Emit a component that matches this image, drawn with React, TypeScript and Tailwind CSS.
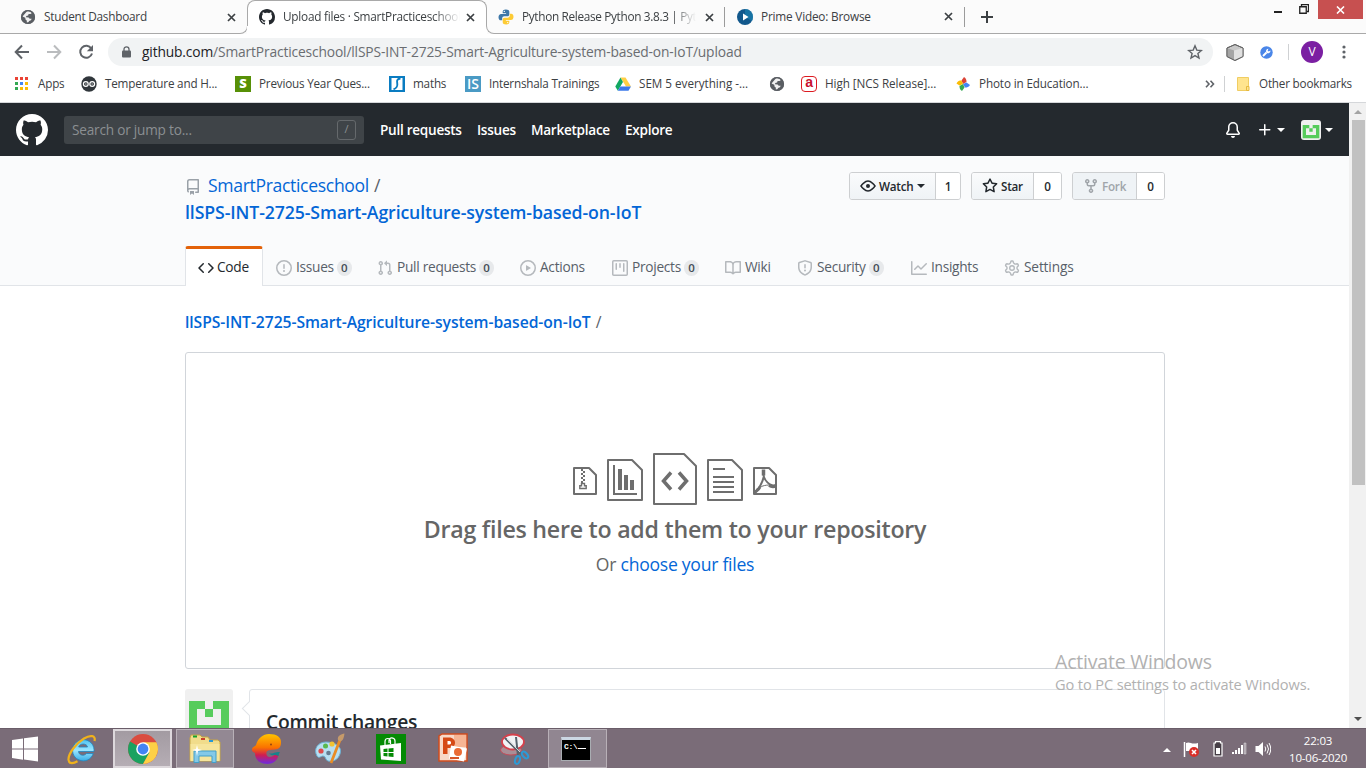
import type { ReactNode } from "react";

const P = {
  github: "M8 0C3.58 0 0 3.58 0 8c0 3.54 2.29 6.53 5.47 7.59.4.07.55-.17.55-.38 0-.19-.01-.82-.01-1.49-2.01.37-2.53-.49-2.69-.94-.09-.23-.48-.94-.82-1.13-.28-.15-.68-.52-.01-.53.63-.01 1.08.58 1.23.82.72 1.21 1.87.87 2.33.66.07-.52.28-.87.51-1.07-1.78-.2-3.64-.89-3.64-3.95 0-.87.31-1.59.82-2.15-.08-.2-.36-1.02.08-2.12 0 0 .67-.21 2.2.82.64-.18 1.32-.27 2-.27.68 0 1.36.09 2 .27 1.53-1.04 2.2-.82 2.2-.82.44 1.1.16 1.92.08 2.12.51.56.82 1.27.82 2.15 0 3.07-1.87 3.75-3.65 3.95.29.25.54.73.54 1.48 0 1.07-.01 1.93-.01 2.2 0 .21.15.46.55.38A8.013 8.013 0 0016 8c0-4.42-3.58-8-8-8z",
  repo: "M2 2.5A2.5 2.5 0 014.5 0h8.75a.75.75 0 01.75.75v12.5a.75.75 0 01-.75.75h-2.5a.75.75 0 110-1.5h1.75v-2h-8a1 1 0 00-.714 1.7.75.75 0 01-1.072 1.05A2.495 2.495 0 012 11.5v-9zm10.5-1V9h-8c-.356 0-.694.074-1 .208V2.5a1 1 0 011-1h8zM5 12.25v3.25a.25.25 0 00.4.2l1.45-1.087a.25.25 0 01.3 0L8.6 15.7a.25.25 0 00.4-.2v-3.25a.25.25 0 00-.25-.25h-3.5a.25.25 0 00-.25.25z",
  code: "M4.72 3.22a.75.75 0 011.06 1.06L2.06 8l3.72 3.72a.75.75 0 11-1.06 1.06L.47 8.53a.75.75 0 010-1.06l4.25-4.25zm6.56 0a.75.75 0 10-1.06 1.06L13.94 8l-3.72 3.72a.75.75 0 101.06 1.06l4.25-4.25a.75.75 0 000-1.06l-4.25-4.25z",
  issue: "M8 1.5a6.5 6.5 0 100 13 6.5 6.5 0 000-13zM0 8a8 8 0 1116 0A8 8 0 010 8zm9 3a1 1 0 11-2 0 1 1 0 012 0zm-.25-6.25a.75.75 0 00-1.5 0v3.5a.75.75 0 001.5 0v-3.5z",
  pull: "M7.177 3.073L9.573.677A.25.25 0 0110 .854v4.792a.25.25 0 01-.427.177L7.177 3.427a.25.25 0 010-.354zM3.75 2.5a.75.75 0 100 1.5.75.75 0 000-1.5zm-2.25.75a2.25 2.25 0 113 2.122v5.256a2.251 2.251 0 11-1.5 0V5.372A2.25 2.25 0 011.5 3.25zM11 2.5h-1V4h1a1 1 0 011 1v5.628a2.251 2.251 0 101.5 0V5A2.5 2.5 0 0011 2.5zm1 10.25a.75.75 0 111.5 0 .75.75 0 01-1.5 0zM3.75 12a.75.75 0 100 1.5.75.75 0 000-1.5z",
  play: "M1.5 8a6.5 6.5 0 1113 0 6.5 6.5 0 01-13 0zM8 0a8 8 0 100 16A8 8 0 008 0zM6.379 5.227A.25.25 0 006 5.442v5.117a.25.25 0 00.379.214l4.264-2.559a.25.25 0 000-.428L6.379 5.227z",
  project: "M1.75 0A1.75 1.75 0 000 1.75v12.5C0 15.216.784 16 1.75 16h12.5A1.75 1.75 0 0016 14.25V1.75A1.75 1.75 0 0014.25 0H1.75zM1.5 1.75a.25.25 0 01.25-.25h12.5a.25.25 0 01.25.25v12.5a.25.25 0 01-.25.25H1.75a.25.25 0 01-.25-.25V1.75zM11.75 3a.75.75 0 00-.75.75v7.5a.75.75 0 001.5 0v-7.5a.75.75 0 00-.75-.75zm-8.25.75a.75.75 0 011.5 0v5.5a.75.75 0 01-1.5 0v-5.5zM8 3a.75.75 0 00-.75.75v3.5a.75.75 0 001.5 0v-3.5A.75.75 0 008 3z",
  book: "M0 1.75A.75.75 0 01.75 1h4.253c1.227 0 2.317.59 3 1.501A3.744 3.744 0 0111.006 1h4.245a.75.75 0 01.75.75v10.5a.75.75 0 01-.75.75h-4.507a2.25 2.25 0 00-1.591.659l-.622.621a.75.75 0 01-1.06 0l-.622-.621A2.25 2.25 0 005.258 13H.75a.75.75 0 01-.75-.75V1.75zm8.755 3a2.25 2.25 0 012.25-2.25H14.5v9h-3.757c-.71 0-1.4.201-1.992.572l.004-7.322zm-1.504 7.324l.004-5.073-.002-2.253A2.25 2.25 0 005.003 2.5H1.5v9h3.757a3.75 3.75 0 011.994.574z",
  shield: "M7.467.133a1.75 1.75 0 011.066 0l5.25 1.68A1.75 1.75 0 0115 3.48V7c0 1.566-.32 3.182-1.303 4.682-.983 1.498-2.585 2.813-5.032 3.855a1.7 1.7 0 01-1.33 0c-2.447-1.042-4.049-2.357-5.032-3.855C1.32 10.182 1 8.566 1 7V3.48a1.75 1.75 0 011.217-1.667l5.25-1.68zm.61 1.429a.25.25 0 00-.153 0l-5.25 1.68a.25.25 0 00-.174.238V7c0 1.358.275 2.666 1.057 3.86.784 1.194 2.121 2.34 4.366 3.297a.2.2 0 00.154 0c2.245-.956 3.582-2.104 4.366-3.298C13.225 9.666 13.5 8.36 13.5 7V3.48a.25.25 0 00-.174-.237l-5.25-1.68zM9 10.5a1 1 0 11-2 0 1 1 0 012 0zm-.25-5.75a.75.75 0 10-1.5 0v3a.75.75 0 001.5 0v-3z",
  graph: "M1.5 1.75a.75.75 0 00-1.5 0v12.5c0 .414.336.75.75.75h14.5a.75.75 0 000-1.5H1.5V1.75zm14.28 2.53a.75.75 0 00-1.06-1.06L10 7.94 7.53 5.47a.75.75 0 00-1.06 0L3.22 8.72a.75.75 0 001.06 1.06L7 7.06l2.47 2.47a.75.75 0 001.06 0l5.25-5.25z",
  star: "M8 .25a.75.75 0 01.673.418l1.882 3.815 4.21.612a.75.75 0 01.416 1.279l-3.046 2.97.719 4.192a.75.75 0 01-1.088.791L8 12.347l-3.766 1.98a.75.75 0 01-1.088-.79l.72-4.194L.818 6.374a.75.75 0 01.416-1.28l4.21-.611L7.327.668A.75.75 0 018 .25zm0 2.445L6.615 5.5a.75.75 0 01-.564.41l-3.097.45 2.24 2.184a.75.75 0 01.216.664l-.528 3.084 2.769-1.456a.75.75 0 01.698 0l2.77 1.456-.53-3.084a.75.75 0 01.216-.664l2.24-2.183-3.096-.45a.75.75 0 01-.564-.41L8 2.694v.001z",
  fork: "M5 3.25a.75.75 0 11-1.5 0 .75.75 0 011.5 0zm0 2.122a2.25 2.25 0 10-1.5 0v.878A2.25 2.25 0 005.75 8.5h1.5v2.128a2.251 2.251 0 101.5 0V8.5h1.5a2.25 2.25 0 002.25-2.25v-.878a2.25 2.25 0 10-1.5 0v.878a.75.75 0 01-.75.75h-4.5A.75.75 0 015 6.25v-.878zm3.75 7.378a.75.75 0 11-1.5 0 .75.75 0 011.5 0zm3-8.75a.75.75 0 100-1.5.75.75 0 000 1.5z",
  bell: "M8 16a2 2 0 001.985-1.75c.017-.137-.097-.25-.235-.25h-3.5c-.138 0-.252.113-.235.25A2 2 0 008 16zM8 1.5A3.5 3.5 0 004.5 5v2.947c0 .346-.102.683-.294.97l-1.703 2.556a.018.018 0 00-.003.01l.018.017h10.964l.018-.017a.017.017 0 00-.003-.01l-1.703-2.554a1.75 1.75 0 01-.294-.97V5A3.5 3.5 0 008 1.5zM3 5a5 5 0 0110 0v2.947c0 .05.015.098.042.139l1.703 2.555A1.518 1.518 0 0113.482 13H2.518a1.518 1.518 0 01-1.263-2.36l1.703-2.554A.25.25 0 003 7.947V5z",
  plus: "M7.75 2a.75.75 0 01.75.75V7h4.25a.75.75 0 110 1.5H8.5v4.25a.75.75 0 11-1.5 0V8.5H2.75a.75.75 0 010-1.5H7V2.75A.75.75 0 017.75 2z",
};

const GEAR = "M7.429 1.025a7 7 0 011.142 0c.3.03.5.25.57.5l.289 1.105c.1.4.4.7.72.87.2.1.4.21.58.33.33.22.73.32 1.13.22l1.102-.303c.3-.08.58.03.74.26.25.35.46.72.64 1.1.12.27.06.57-.16.79l-.815.806c-.28.28-.41.67-.39 1.06v.48c-.02.39.11.78.39 1.06l.815.806c.22.22.28.52.16.79-.18.38-.39.75-.64 1.1-.16.23-.44.34-.74.26l-1.102-.303c-.4-.1-.8 0-1.13.22-.18.12-.38.23-.58.33-.32.17-.62.47-.72.87l-.289 1.105c-.07.25-.27.47-.57.5a7 7 0 01-1.142 0c-.3-.03-.5-.25-.57-.5l-.289-1.105c-.1-.4-.4-.7-.72-.87-.2-.1-.4-.21-.58-.33-.33-.22-.73-.32-1.13-.22l-1.102.303c-.3.08-.58-.03-.74-.26-.25-.35-.46-.72-.64-1.1-.12-.27-.06-.57.16-.79l.815-.806c.28-.28.41-.67.39-1.06v-.48c.02-.39-.11-.78-.39-1.06l-.815-.806c-.22-.22-.28-.52-.16-.79.18-.38.39-.75.64-1.1.16-.23.44-.34.74-.26l1.102.303c.4.1.8 0 1.13-.22.18-.12.38-.23.58-.33.32-.17.62-.47.72-.87l.289-1.105c.07-.25.27-.47.57-.5z";

function Oct({ d, size = 16, className = "" }: { d: string; size?: number; className?: string }) {
  return (
    <svg width={size} height={size} viewBox="0 0 16 16" fill="currentColor" fillRule="evenodd" className={"shrink-0 " + className}>
      <path d={d} />
    </svg>
  );
}

function Svg({ w = 16, h, className = "", children }: { w?: number; h?: number; className?: string; children: ReactNode }) {
  const hh = h ?? w;
  return (
    <svg width={w} height={hh} viewBox={`0 0 ${w} ${hh}`} fill="none" className={"shrink-0 " + className}>
      {children}
    </svg>
  );
}

function Globe() {
  return (
    <Svg>
      <circle cx="8" cy="8" r="7" fill="#5a5e63" />
      <path d="M7 2.200c2-.2 3.800.5 4.900 1.800L10.600 5l-2 .1-.5 1.500-1.900.3-.1 1.300 2.500.3 1.100 1.200 2 .1-.8 1.500-1.800.6-.7 1.400-1.700.4.2-2-1.400-1.200-.2-1.700-2.800-1.400z" fill="#f1f1f1" />
      <circle cx="8" cy="8" r="6.400" stroke="#5a5e63" strokeWidth="1.400" />
    </Svg>
  );
}

function Close() {
  return (
    <Svg w={9} className="text-[#3c4043]">
      <path d="M1 1l7 7M8 1L1 8" stroke="currentColor" strokeWidth="1.700" />
    </Svg>
  );
}

function Python() {
  const d = "M7.900 .6C5.200.6 4.700 1.800 4.700 2.800v1.500h3.400v.6H3.200C1.500 4.900.5 6.200.5 8.200s1 3.100 2.300 3.100h1.400V9.400c0-1.200.9-2.100 2.100-2.100h3.200c1 0 1.800-.8 1.800-1.800V2.800C11.300 1.300 10 .6 7.900.6z";
  return (
    <Svg>
      <path d={d} fill="#3d77a8" />
      <path d={d} fill="#fdcb35" transform="rotate(180 8 8)" />
      <circle cx="6.300" cy="2.400" r=".7" fill="#fff" />
      <circle cx="9.700" cy="13.600" r=".7" fill="#fff" />
    </Svg>
  );
}

function Identicon({ size }: { size: number }) {
  return (
    <svg width={size} height={size} viewBox="0 0 48 48" className="shrink-0 rounded-[3px] bg-[#f0f0f0]">
      <path fill="#57cc5c" fillRule="evenodd" d="M4 12h16v8h8v-8h16v32H4zM12 20v16h24V20h-8v8h-8v-8z" />
    </svg>
  );
}

function BrowserTabs() {
  return (
    <div className="flex h-[34px] items-start bg-[#fbfbfb] text-[11.800px] tracking-[-0.250px] text-[#3c4043]">
      <div className="relative flex h-[34px] w-[247px] items-center pl-5 before:absolute before:right-[-1px] before:bottom-0 before:h-[26px] before:w-[248px] before:rounded-br-lg before:border-r before:border-b before:border-[#a9a9a9]">
        <Globe />
        <span className="ml-2 w-[183px] whitespace-nowrap">Student Dashboard</span>
        <Close />
      </div>
      <div className="relative flex h-[34px] w-60 items-center bg-white pl-3">
        <span className="absolute -left-px top-0 h-[26px] w-2 bg-[#fbfbfb]" />
        <span className="absolute -right-px top-0 h-[26px] w-2 bg-[#fbfbfb]" />
        <span className="absolute top-0 left-0 h-[26px] w-[240px] rounded-t-lg border-x border-t border-[#a9a9a9] bg-white" />
        <Oct d={P.github} className="relative text-[#24292e]" />
        <span className="relative ml-2 w-[177px] overflow-hidden whitespace-nowrap [mask-image:linear-gradient(90deg,#000_150px,transparent)]">Upload files · SmartPracticeschool</span>
        <span className="relative ml-[6px]"><Close /></span>
      </div>
      <div className="relative flex h-[34px] w-[238px] items-center pl-[11px] before:absolute before:bottom-0 before:-left-px before:h-[26px] before:w-[239px] before:rounded-bl-lg before:border-b before:border-l before:border-[#a9a9a9]">
        <Python />
        <span className="ml-2 w-[174px] overflow-hidden tracking-[-0.330px] whitespace-nowrap [mask-image:linear-gradient(90deg,#000_150px,transparent)]">Python Release Python 3.8.3 | Python</span>
        <span className="ml-[9px]"><Close /></span>
        <span className="absolute right-0 top-[7px] h-5 w-px bg-[#9b9b9b]" />
      </div>
      <div className="relative flex h-[34px] w-[240px] items-center border-b border-[#a9a9a9] pl-3">
        <Svg>
          <circle cx="8" cy="8" r="8" fill="#12588c" />
          <path d="M8 0a8 8 0 017 12L8 8z" fill="#1c86b4" opacity=".6" />
          <path d="M6 4.500v7L11.500 8z" fill="#fff" />
        </Svg>
        <span className="ml-2 w-[183px] tracking-[-0.200px] whitespace-nowrap">Prime Video: Browse</span>
        <Close />
        <span className="absolute right-0 top-[7px] h-5 w-px bg-[#9b9b9b]" />
      </div>
      <div className="flex h-[34px] grow border-b border-[#a9a9a9]">
        <Svg w={12} className="mt-[11px] ml-4"><path d="M6 0v12M0 6h12" stroke="#3c4043" strokeWidth="2" /></Svg>
        <span className="mt-[11px] ml-[281px] h-[2px] w-2 bg-[#222]" />
        <Svg w={10} className="mt-1 ml-[17px]"><path d="M2.500 2V.5h7v7H8M.75 2.750h6.500v6.500H.75z" stroke="#222" strokeWidth="1.300" /></Svg>
        <div className="ml-[9px] flex h-[19px] w-[45px] items-center justify-center bg-[#c75050]">
          <Svg w={9} h={8}><path d="M1 .5l7 7M8 .5l-7 7" stroke="#fff" strokeWidth="1.600" /></Svg>
        </div>
      </div>
    </div>
  );
}

function Toolbar() {
  return (
    <div className="flex h-9 items-center bg-white">
      <Svg className="ml-[14px] text-[#5f6368]"><path d="M15 8H2M8 1.500L1.700 8 8 14.500" stroke="currentColor" strokeWidth="2" /></Svg>
      <Svg className="ml-4 text-[#babcbe]"><path d="M1 8h13M8 1.500L14.300 8 8 14.500" stroke="currentColor" strokeWidth="2" /></Svg>
      <Svg className="ml-4 text-[#5f6368]"><path d="M13.300 4.500A6 6 0 1014 9.500" stroke="currentColor" strokeWidth="2" /><path d="M15 1v6.200H8.800z" fill="currentColor" /></Svg>
      <div className="ml-[14px] flex h-7 w-[1105px] items-center rounded-full bg-[#f1f3f4] text-[13.800px] tracking-[-0.150px]">
        <Svg w={9} h={12} className="ml-[14px]"><path d="M2 5V3.300a2.500 2.500 0 015 0V5" stroke="#5f6368" strokeWidth="1.300" /><rect y="4.500" width="9" height="7" rx="1" fill="#5f6368" /></Svg>
        <span className="ml-[11px] w-[1045px] pt-px whitespace-nowrap text-[#6a6d71]"><span className="text-[#202124]">github.com</span>/SmartPracticeschool/llSPS-INT-2725-Smart-Agriculture-system-based-on-IoT/upload</span>
        <Svg><path d="M8 1.800l1.800 4.300 4.600.4-3.500 3 1.100 4.500L8 11.600 4 14l1.100-4.500-3.500-3 4.600-.4z" stroke="#5f6368" strokeWidth="1.400" /></Svg>
      </div>
      <Svg w={18} h={17} className="ml-[13px]">
        <path d="M1 4l8-3.500L17 4v8.500l-8 4-8-4z" fill="#c9c9c9" stroke="#666" /><path d="M1 4l7 2.500v9.500l-7-3.500z" fill="#a5a5a5" /><path d="M8 6.500L17 4v8.500L8 16z" fill="#e0e0e0" /><path d="M1 4l8-3.500L17 4v8.500l-8 4-8-4z" stroke="#666" />
      </Svg>
      <Svg w={13} className="ml-4"><circle cx="6.500" cy="6.500" r="6.200" fill="#4a86e8" /><path d="M3 10l3.500-3.500" stroke="#fff" strokeWidth="1.900" /><path d="M10.500 4.500a2.500 2.500 0 01-4 2.200 2.500 2.500 0 012-4L7.600 4.500l1.100 1z" fill="#fff" /></Svg>
      <span className="ml-[15px] h-4 w-px bg-[#cfd1d3]" />
      <span className="ml-[12px] flex size-[22px] items-center justify-center rounded-full bg-[#7b1fa2] text-[12px] text-white">V</span>
      <Svg w={4} h={14} className="ml-[19px]"><circle cx="2" cy="2" r="1.600" fill="#5f6368" /><circle cx="2" cy="7" r="1.600" fill="#5f6368" /><circle cx="2" cy="12" r="1.600" fill="#5f6368" /></Svg>
    </div>
  );
}

function Bookmark({ icon, label, className }: { icon: ReactNode; label?: string; className: string }) {
  return (
    <div className={"flex shrink-0 items-center whitespace-nowrap " + className}>
      {icon}
      {label && <span className="ml-2">{label}</span>}
    </div>
  );
}

function Bookmarks() {
  const colors = ["#ea4335", "#ea4335", "#ea4335", "#34a853", "#4285f4", "#fbbc05", "#34a853", "#fbbc05", "#fbbc05"];
  return (
    <div className="flex h-[33px] items-center border-b border-[#d5d7da] bg-white pb-1 pl-[14px] text-[11.700px] tracking-[-0.200px] text-[#3c4043]">
      <Bookmark className="w-[67px]" label="Apps" icon={<Svg>{colors.map((c, i) => <rect key={i} x={1 + (i % 3) * 5} y={1 + Math.floor(i / 3) * 5} width="3" height="3" fill={c} />)}</Svg>} />
      <Bookmark className="w-[154px]" label="Temperature and H..." icon={<Svg><circle cx="8" cy="8" r="7.700" fill="#30363b" /><circle cx="4.800" cy="8" r="2.400" stroke="#fff" strokeWidth="1.200" /><circle cx="11.200" cy="8" r="2.400" stroke="#fff" strokeWidth="1.200" /><path d="M4 8h1.700M10.400 8h1.700" stroke="#fff" strokeWidth=".7" /></Svg>} />
      <Bookmark className="w-[154px]" label="Previous Year Ques..." icon={<span className="flex size-4 items-center justify-center bg-[#579007] text-[13px] font-extrabold text-white">S</span>} />
      <Bookmark className="w-[76px]" label="maths" icon={<Svg><path d="M0 0h16v16H0z" fill="#0a7cc1" /><path d="M2.500 2h11v12h-11z" fill="#fff" /><path d="M11.500 2.800C9 2.500 7.500 4 8.200 7c.6 2.800-.6 5.500-3.700 6.200" stroke="#0a7cc1" strokeWidth="1.900" /></Svg>} />
      <Bookmark className="w-[150px]" label="Internshala Trainings" icon={<span className="flex size-4 items-center justify-center bg-[#4a9ac4] text-[14px] leading-4 font-semibold tracking-normal text-white">IS</span>} />
      <Bookmark className="w-[154px] tracking-[-0.020px]" label="SEM 5 everything -..." icon={<Svg><path d="M5.500 1.500h5L16 10.500h-5z" fill="#ffcf44" /><path d="M5.500 1.500L.3 10.500 2.800 14.800 8 6z" fill="#11a861" /><path d="M5.300 10.500H16l-2.500 4.300H2.800z" fill="#3b79ea" /></Svg>} />
      <Bookmark className="w-8" icon={<Globe />} />
      <Bookmark className="w-[154px] tracking-[-0.060px]" label="High [NCS Release]..." icon={<span className="flex size-4 items-center justify-center rounded-[4px] border-[1.500px] border-[#dd1b21] pb-[3px] font-['Liberation_Sans'] text-[14px] leading-3 font-bold text-[#c8102e]">a</span>} />
      <Bookmark className="w-[249px] tracking-[-0.130px]" label="Photo in Education..." icon={<Svg><path d="M8 8L6.500 4.500 9 1c2 1 2.500 3 2.500 5L8 8z" fill="#db4437" /><path d="M8 8l3.500-1.500L15 9c-1 2-3 2.500-5 2.500z" fill="#4285f4" /><path d="M8 8l1.500 3.500L7 15c-2-1-2.500-3-2.500-5z" fill="#34a853" /><path d="M8 8L4.500 9.500 1.500 7.500C2.500 5 4.500 4.500 6.500 4.500z" fill="#fbbc05" /></Svg>} />
      <Svg w={10} h={8} className="ml-px"><path d="M1 .8L4 4 1 7.200M5.500.8l3 3.200-3 3.200" stroke="#5f6368" strokeWidth="1.600" /></Svg>
      <span className="ml-[9px] h-4 w-px bg-[#cfd1d3]" />
      <Svg w={13} h={14} className="ml-3"><path d="M.5.5h11v13H.5z" fill="#ffe48e" stroke="#f0cd62" /><path d="M9.500 9.500h2.500v4H9.500z" fill="#ffe48e" stroke="#e6b93f" /></Svg>
      <span className="ml-[9px] whitespace-nowrap">Other bookmarks</span>
    </div>
  );
}

function Caret({ className }: { className: string }) {
  return <span className={"border-x-4 border-t-4 border-x-transparent " + className} />;
}

function GithubHeader() {
  return (
    <div className="flex h-[53px] shrink-0 items-center bg-[#24292e] pl-4 text-white">
      <Oct d={P.github} size={32} />
      <div className="ml-4 flex h-7 w-[300px] items-center justify-between rounded-[3px] bg-[#3f4448] pr-2 pl-2 text-[13.600px] font-medium tracking-[-0.200px] text-[#8b8f92]">
        <span className="pt-px">Search or jump to...</span>
        <span className="flex h-5 w-[19px] items-center justify-center rounded-[3px] border border-[#65696c] text-[11px] font-normal">/</span>
      </div>
      <div className="ml-4 flex pt-px text-[13.600px] font-semibold tracking-[-0.280px] whitespace-nowrap">
        <span className="w-[97px]">Pull requests</span>
        <span className="w-[54px]">Issues</span>
        <span className="w-[94px]">Marketplace</span>
        <span className="w-[600px]">Explore</span>
      </div>
      <Oct d={P.bell} />
      <Oct d={P.plus} className="ml-4" />
      <Caret className="ml-1 border-t-white" />
      <span className="ml-4"><Identicon size={20} /></span>
      <Caret className="ml-1 border-t-white" />
    </div>
  );
}

function CountButton({ icon, label, count, className, disabled, caret }: { icon: ReactNode; label: string; count: string; className: string; disabled?: boolean; caret?: boolean }) {
  return (
    <div className="flex h-7 overflow-hidden rounded-[3px] border border-[#cdcfd1] text-[11.700px] font-semibold tracking-[-0.250px] text-[#24292e]">
      <div className={"flex items-center border-r border-[#cdcfd1] pl-[10px] " + className + (disabled ? " bg-[#eff3f6] text-[#a0a5aa]" : " bg-linear-to-b from-[#fafbfc] to-[#eff3f6]")}>
        {icon}
        <span className="ml-[3px] pt-px">{label}</span>
        {caret && <Caret className="ml-1 border-t-[#24292e]" />}
      </div>
      <div className="flex grow items-center justify-center bg-white pt-px">{count}</div>
    </div>
  );
}

function NavItem({ icon, label, count, className }: { icon: ReactNode; label: string; count?: boolean; className: string }) {
  return (
    <div className={"flex h-10 shrink-0 items-center pt-[3px] whitespace-nowrap text-[#586069] " + className}>
      <span className="text-[#b5b9bd]">{icon}</span>
      <span className="ml-1">{label}</span>
      {count && <span className="ml-[3px] flex h-[16px] w-[15px] items-center justify-center rounded-full bg-[#e7e9eb] text-[11.500px] font-semibold tracking-normal text-[#444d56]">0</span>}
    </div>
  );
}

function RepoHead() {
  return (
    <div className="flex h-[130px] shrink-0 flex-col justify-between border-b border-[#e1e4e8] bg-[#fafbfc] pr-[184px] pl-[185px]">
      <div className="flex justify-between pt-4">
        <div className="text-[17.600px] leading-[27px] tracking-[-0.340px] whitespace-nowrap text-[#0366d6]">
          <div className="flex items-center">
            <Oct d={P.repo} className="mt-[2px] text-[#9aa1a8]" />
            <span className="ml-[7px]">SmartPracticeschool</span>
            <span className="ml-[5px] text-[#586069]">/</span>
          </div>
          <div className="text-[17.700px] font-semibold tracking-[-0.110px]">llSPS-INT-2725-Smart-Agriculture-system-based-on-IoT</div>
        </div>
        <div className="flex gap-[10px]">
          <div className="w-[112px]"><CountButton className="w-[86px]" caret label="Watch" count="1" icon={<Svg><path d="M1 8c.5-.8 1.400-1.900 2.600-2.900C4.800 4 6.300 3 8 3s3.200 1 4.400 2.100C13.600 6.100 14.500 7.200 15 8c-.5.800-1.400 1.900-2.600 2.900C11.200 12 9.700 13 8 13s-3.200-1-4.400-2.100C2.400 9.900 1.500 8.800 1 8z" stroke="currentColor" strokeWidth="1.500" /><circle cx="8" cy="8" r="2" fill="currentColor" /></Svg>} /></div>
          <div className="w-[91px]"><CountButton className="w-[62px]" label="Star" count="0" icon={<Oct d={P.star} />} /></div>
          <div className="w-[93px]"><CountButton className="w-[64px]" disabled label="Fork" count="0" icon={<Oct d={P.fork} />} /></div>
        </div>
      </div>
      <div className="-mb-px flex text-[13.700px] tracking-[-0.280px]">
        <div className="mr-[13px] flex h-10 w-[78px] shrink-0 items-center rounded-t-[3px] border-x border-t-[3px] border-x-[#e1e4e8] border-t-[#e36209] bg-white pl-3 text-[#24292e]">
          <Oct d={P.code} />
          <span className="ml-[3px]">Code</span>
        </div>
        <NavItem className="w-[101px]" icon={<Oct d={P.issue} />} label="Issues" count />
        <NavItem className="w-[143px]" icon={<Oct d={P.pull} />} label="Pull requests" count />
        <NavItem className="w-[92px]" icon={<Oct d={P.play} />} label="Actions" />
        <NavItem className="w-[113px]" icon={<Oct d={P.project} />} label="Projects" count />
        <NavItem className="w-[72px]" icon={<Oct d={P.book} />} label="Wiki" />
        <NavItem className="w-[114px]" icon={<Oct d={P.shield} />} label="Security" count />
        <NavItem className="w-[93px]" icon={<Oct d={P.graph} />} label="Insights" />
        <NavItem className="w-[72px] tracking-[-0.150px]" icon={<Svg><path d={GEAR} stroke="currentColor" strokeWidth="1.400" /><circle cx="8" cy="8" r="2.300" stroke="currentColor" strokeWidth="1.400" /></Svg>} label="Settings" />
      </div>
    </div>
  );
}

function DropZone() {
  return (
    <div className="mt-[17px] flex h-[317px] shrink-0 flex-col items-center rounded-[3px] border border-[#d1d5da] pt-[100px] text-[#666]">
      <div className="flex items-start gap-[10px] text-[#6e6e6e]">
        <Svg w={24} h={28} className="mt-[14px]"><path d="M1 1h15l7 7v19H1z" stroke="currentColor" strokeWidth="2" strokeLinejoin="round" /><path d="M9 2v14" stroke="currentColor" strokeWidth="2" strokeDasharray="2 2" /><path d="M11 4v12" stroke="currentColor" strokeWidth="2" strokeDasharray="2 2" /><path d="M8.500 16.500h3v2.300h1.700v2.700H6.800v-2.700h1.700z" stroke="currentColor" strokeWidth="1.400" /></Svg>
        <Svg w={36} h={42} className="mt-[6px]"><path d="M1 1h24l10 10v30H1z" stroke="currentColor" strokeWidth="2" strokeLinejoin="round" /><path d="M7 6v29h23" stroke="currentColor" strokeWidth="2" /><path d="M11 10h4v21h-4zM17 16h4v15h-4zM23 21h4v10h-4z" fill="currentColor" /></Svg>
        <Svg w={44} h={52}><path d="M1 1h30l12 12v38H1z" stroke="currentColor" strokeWidth="2" strokeLinejoin="round" /><path d="M18 19.500L10.500 28l7.500 8.500M26 19.500l7.500 8.500-7.500 8.500" stroke="currentColor" strokeWidth="3.500" /></Svg>
        <Svg w={36} h={42} className="mt-[6px]"><path d="M1 1h24l10 10v30H1z" stroke="currentColor" strokeWidth="2" strokeLinejoin="round" /><path d="M6 10h12M6 18h21M6 23h21M6 28h21M6 33h21" stroke="currentColor" strokeWidth="2" /></Svg>
        <Svg w={24} h={28} className="mt-[14px]"><path d="M1 1h15l7 7v19H1z" stroke="currentColor" strokeWidth="2" strokeLinejoin="round" /><path d="M10.500 3v5c.5 4 3 7 6.500 9.500 2 1 4 1.500 6 .5M11 9C9.500 15 6 22 1.500 26" stroke="currentColor" strokeWidth="2" /><path d="M10.500 2.500v6" stroke="currentColor" strokeWidth="3.500" /><path d="M2 25c2-1.500 4-2.500 5-5M16 18.500c2.500 1.500 4.500 1.500 7 .5" stroke="currentColor" strokeWidth="3" /><path d="M3 22.500c5-3.500 9-4.500 14-4.500" stroke="currentColor" strokeWidth="1" /></Svg>
      </div>
      <div className="mt-[6px] text-[23.200px] leading-9 font-semibold tracking-[-0.250px] whitespace-nowrap">Drag files here to add them to your repository</div>
      <div className="mt-1 text-[17.600px] leading-[27px] tracking-[-0.270px] whitespace-nowrap">Or <span className="text-[#0366d6]">choose your files</span></div>
    </div>
  );
}

function Page() {
  return (
    <div className="flex h-[625px] overflow-hidden">
      <div className="flex w-[1349px] flex-col bg-white">
        <GithubHeader />
        <RepoHead />
        <div className="flex flex-col px-[185px] pr-[184px]">
          <div className="mt-[23px] text-[15.700px] leading-[26px] tracking-[-0.080px] whitespace-nowrap text-[#586069]"><span className="font-semibold text-[#0366d6]">llSPS-INT-2725-Smart-Agriculture-system-based-on-IoT</span><span className="ml-[5px]">/</span></div>
          <DropZone />
          <div className="mt-5 flex">
            <Identicon size={48} />
            <div className="relative ml-4 h-[120px] grow rounded-[3px] border border-[#e1e4e8] pt-[18px] pl-4 text-[19.300px] leading-7 font-semibold tracking-[-0.300px] text-[#24292e]">
              <span className="absolute top-[13px] -left-[6px] size-[11px] rotate-45 border-b border-l border-[#e1e4e8] bg-white" />
              Commit changes
            </div>
          </div>
        </div>
      </div>
      <div className="flex w-[17px] flex-col items-center bg-[#f1f1f1] pl-px">
        <span className="mt-[7px] border-x-4 border-b-4 border-x-transparent border-b-[#a3a3a3]" />
        <span className="mt-[6px] h-[365px] w-[13px] bg-[#c1c1c1]" />
        <span className="grow" />
        <span className="mb-[7px] border-x-4 border-t-4 border-x-transparent border-t-[#505050]" />
      </div>
    </div>
  );
}

function Slot({ className, children }: { className: string; children: ReactNode }) {
  return <div className={"flex h-[39px] shrink-0 items-center justify-center " + className}>{children}</div>;
}

function Taskbar() {
  return (
    <div className="flex h-10 border-t border-[#6a5d69] bg-[#7a6c78] text-white">
      <Slot className="w-[50px]"><Svg w={28} h={26}><path d="M1 4l11-1.500V12.500H1zM13 2.300L27 .5v12H13zM1 13.500h11v10.200L1 22zM13 13.500h14V25.500l-14-2z" fill="#fff" /></Svg></Slot>
      <Slot className="w-[63px]">
        <Svg w={32} h={32}>
          <defs><linearGradient id="ie" x1="0" y1="0" x2="0" y2="1"><stop stopColor="#4fc3f0" /><stop offset=".5" stopColor="#9be6ff" /><stop offset="1" stopColor="#3aaee6" /></linearGradient></defs>
          <path d="M28 18.500H12.500c.3 4 5.500 5 8 2h6.800C25 27 19 29 14 27.300 8.500 25.500 5.500 20.500 7 14.500 8.500 9 14.500 5.500 20 7c5.500 1.500 8.500 6 8 11.500zM21.500 14c-.5-4-8-4-8.800 0z" fill="url(#ie)" stroke="#1f86c0" strokeWidth=".8" />
          <path d="M28.500 8c1.500-5.500-4-6.500-10.500-2.500C10.500 10 2 20.500 2.500 27c.5 4.500 5.500 3.300 9 1.300" stroke="#f0b21c" strokeWidth="2.200" />
        </Svg>
      </Slot>
      <Slot className="w-[59px] border-2 border-[#ddd8dc] bg-linear-to-b from-[#a39ba2] to-[#b5adb4]">
        <Svg w={30}>
          <circle cx="15" cy="15" r="15" fill="#da4c40" />
          <path d="M15 15L2.010 7.500A15 15 0 0015 30l6.500-11.300z" fill="#1aa260" />
          <path d="M15 8.300h13.400A15 15 0 0115 30l6.300-11.400z" fill="#fdd045" />
          <circle cx="15" cy="15" r="6.800" fill="#fff" /><circle cx="15" cy="15" r="5.400" fill="#4384f3" />
        </Svg>
      </Slot>
      <Slot className="ml-1 w-[58px] border border-[#b8b0b7] bg-[#938893]">
        <Svg w={32} h={30}>
          <path d="M1 4l1-3h9l2 2h6l2 3h8l2 2v19H1z" fill="#f1dc8b" stroke="#c4a544" /><path d="M4 1.500h4v2H4z" fill="#14a22c" /><path d="M12 4h4v2h-4z" fill="#c9412d" /><path d="M20 6h4v2h-4z" fill="#2798d5" />
          <path d="M1.500 10h29v17h-29z" fill="#f6e59c" /><path d="M5 28.500V17h22v11.500h-4V22H10v6.500z" fill="#84c9e8" stroke="#429fc9" /><path d="M8 11l1 4 4 1-4 1-1 5-1-5-4-1 4-1z" fill="#fff" />
        </Svg>
      </Slot>
      <Slot className="w-[66px]">
        <Svg w={30}>
          <defs><linearGradient id="fox" x1="0" y1="0" x2="0" y2="1"><stop stopColor="#ffc400" /><stop offset=".45" stopColor="#fa7200" /><stop offset=".7" stopColor="#d11d50" /><stop offset=".95" stopColor="#7a29ce" /></linearGradient></defs>
          <path d="M0 15c1-3 3-2 4-4C6 4 11 0 17 0c8 0 12 3 12 8.500 0 3.500-1 6.500-6 7-4 .5-8 .2-8.500 3-.5 3 1 4.500 3 4.500 2.500 0 4-1 5-2.500l4 .5c-1 6-6 9-11 9C8 30 3 26 3 19c-2-1-3.500-2-3-4z" fill="url(#fox)" />
          <path d="M17 19.500c4 .5 7-2 11-1.500-1 1-1 2-1.500 4l-3-1c-2 0-4 1-6.500-1.500z" fill="#17828c" />
          <circle cx="19" cy="10.500" r=".9" fill="#8b3d13" />
        </Svg>
      </Slot>
      <Slot className="w-[60px]">
        <Svg w={32} h={32} className="-ml-px -mt-px">
          <path d="M3 24C-1 17 4 10 12 10s17 4 14 12c-2 6-7 8-12 7-3-1-2-5-5-5-2 0-4 3-6 0z" fill="#b7dff2" stroke="#6baed0" />
          <circle cx="7" cy="19" r="2.600" fill="#df4c4c" /><circle cx="11.500" cy="14" r="2.500" fill="#59b94e" /><circle cx="18" cy="12" r="2.600" fill="#f2c231" /><circle cx="14.500" cy="21" r="2.300" fill="#657c91" />
          <path d="M26 8L17 31" stroke="#e98c25" strokeWidth="2.800" /><path d="M24 8c-1-4 3-6 6.500-6.500-.5 2.500-.5 7-4.500 8z" fill="#c69a6a" />
        </Svg>
      </Slot>
      <Slot className="w-[62px]">
        <Svg w={30} className="mr-px"><path d="M0 0h30v30H0z" fill="#048a04" /><path d="M4 11.500L25 9v18L5 25.500z" fill="#fff" /><path d="M9 11V7.500c0-4 5.500-4 5.500 0V10M13 9V6.500c0-4 6-3 6 .5v3" stroke="#fff" strokeWidth="1.200" /><path d="M7.500 15l4-.4v3.400h-4zM12.500 14.500l5-.5v4h-5zM7.500 19h4v3.400l-4-.5zM12.500 19h5v4l-5-.6z" fill="#048a04" /></Svg>
      </Slot>
      <Slot className="w-[62px]">
        <Svg w={30} className="mr-px mb-[2px]"><path d="M4 1h25v27H1V3z" fill="#f8d9c8" stroke="#cf4b1d" strokeWidth="1.500" /><path d="M16 2h12v12H16z" fill="#f6b594" /><path d="M5 21V4.500h6c8 0 8 10.500 0 10.500H9.500v6z" fill="#d64a16" /><path d="M9.500 8h2c2 0 2 3.500 0 3.500h-2z" fill="#fff" /><path d="M13 12.500l16 3-3 13-15-3z" fill="#fff" /><circle cx="20" cy="19" r="4" fill="#ea6b35" /><path d="M12 24h9v2h-9z" fill="#d65629" /></Svg>
      </Slot>
      <Slot className="w-[60px]">
        <Svg w={32} h={32} className="ml-[2px]"><ellipse cx="12" cy="17" rx="10.500" ry="5" fill="#a98e96" stroke="#c54c59" /><ellipse cx="14" cy="9" rx="11" ry="7.500" fill="#f1f2f5" stroke="#d5414c" strokeWidth="1.800" /><path d="M6 5l16 16M17 4l2 19" stroke="#56616b" strokeWidth="2" /><path d="M8 6l13 13" stroke="#fff" strokeWidth=".7" /><ellipse cx="26" cy="22" rx="2.300" ry="4" stroke="#2d9ad5" strokeWidth="2" transform="rotate(-42 26 22)" /><ellipse cx="18.500" cy="27" rx="2.300" ry="4" stroke="#2d9ad5" strokeWidth="2" transform="rotate(18 18.500 27)" /></Svg>
      </Slot>
      <Slot className="ml-1 w-[59px] border border-[#b8b0b7] bg-[#918691]">
        <div className="mr-[3px] h-6 w-[30px] border border-t-[3px] border-[#a9adb2] border-t-[#ccd7e3] bg-black pl-[2px] font-['Liberation_Mono'] text-[8px] leading-[13px] font-bold tracking-[-0.300px]">C:\<span className="inline-block h-[8px] w-2 border-b border-white" /></div>
      </Slot>
      <div className="grow" />
      <div className="flex items-center">
        <span className="mt-[2px] border-x-4 border-b-4 border-x-transparent border-b-white" />
        <Svg w={17} h={16} className="ml-3"><path d="M1.500 1v15" stroke="#fff" strokeWidth="1.500" /><path d="M3 2c4-2 5 2 12 0v8H3z" fill="#fff" /><circle cx="11" cy="11" r="5" fill="#d92f29" /><path d="M9 9l4 4M13 9l-4 4" stroke="#fff" strokeWidth="1.600" /></Svg>
        <Svg w={10} h={16} className="ml-[13px]"><path d="M2.500 2V.7h5V2H9v13H1V2z" fill="#463e46" stroke="#fff" strokeWidth="1.200" /><path d="M3 7h4v6H3z" fill="#fff" /></Svg>
        <Svg w={16} h={13} className="ml-2"><path d="M1 10h2v2H1zM4 8h2v4H4zM7 6h2v6H7zM10 3h2v9h-2z" fill="#fff" /><path d="M13 1h2v11h-2z" fill="#aaa0a9" stroke="#ddd" strokeWidth=".5" /></Svg>
        <Svg w={16} h={16} className="ml-[8px]"><path d="M.5 5h3L8 1v14l-4.500-4h-3z" fill="#fff" /><path d="M10 5.500q1.500 2.500 0 5M12 3.500q3 4.500 0 9M14 2q3.500 6 0 12" stroke="#fff" /></Svg>
      </div>
      <div className="mr-[19px] ml-[18px] w-[58px] pt-[3px] text-center text-[11.500px] leading-[17px] tracking-[-0.200px] whitespace-nowrap">
        <div>22:03</div>
        <div>10-06-2020</div>
      </div>
    </div>
  );
}

export default function App() {
  return (
    <div className="relative h-[768px] w-[1366px] overflow-hidden bg-white font-['Open_Sans','Noto_Sans',sans-serif]">
      <BrowserTabs />
      <Toolbar />
      <Bookmarks />
      <Page />
      <Taskbar />
      <div className="absolute top-[648px] left-[1055px] whitespace-nowrap text-[#b1b1b1]">
        <div className="text-[19.500px] leading-7 tracking-[-0.200px]">Activate Windows</div>
        <div className="-mt-px text-[14.600px] leading-[18px] tracking-[-0.120px]">Go to PC settings to activate Windows.</div>
      </div>
    </div>
  );
}
